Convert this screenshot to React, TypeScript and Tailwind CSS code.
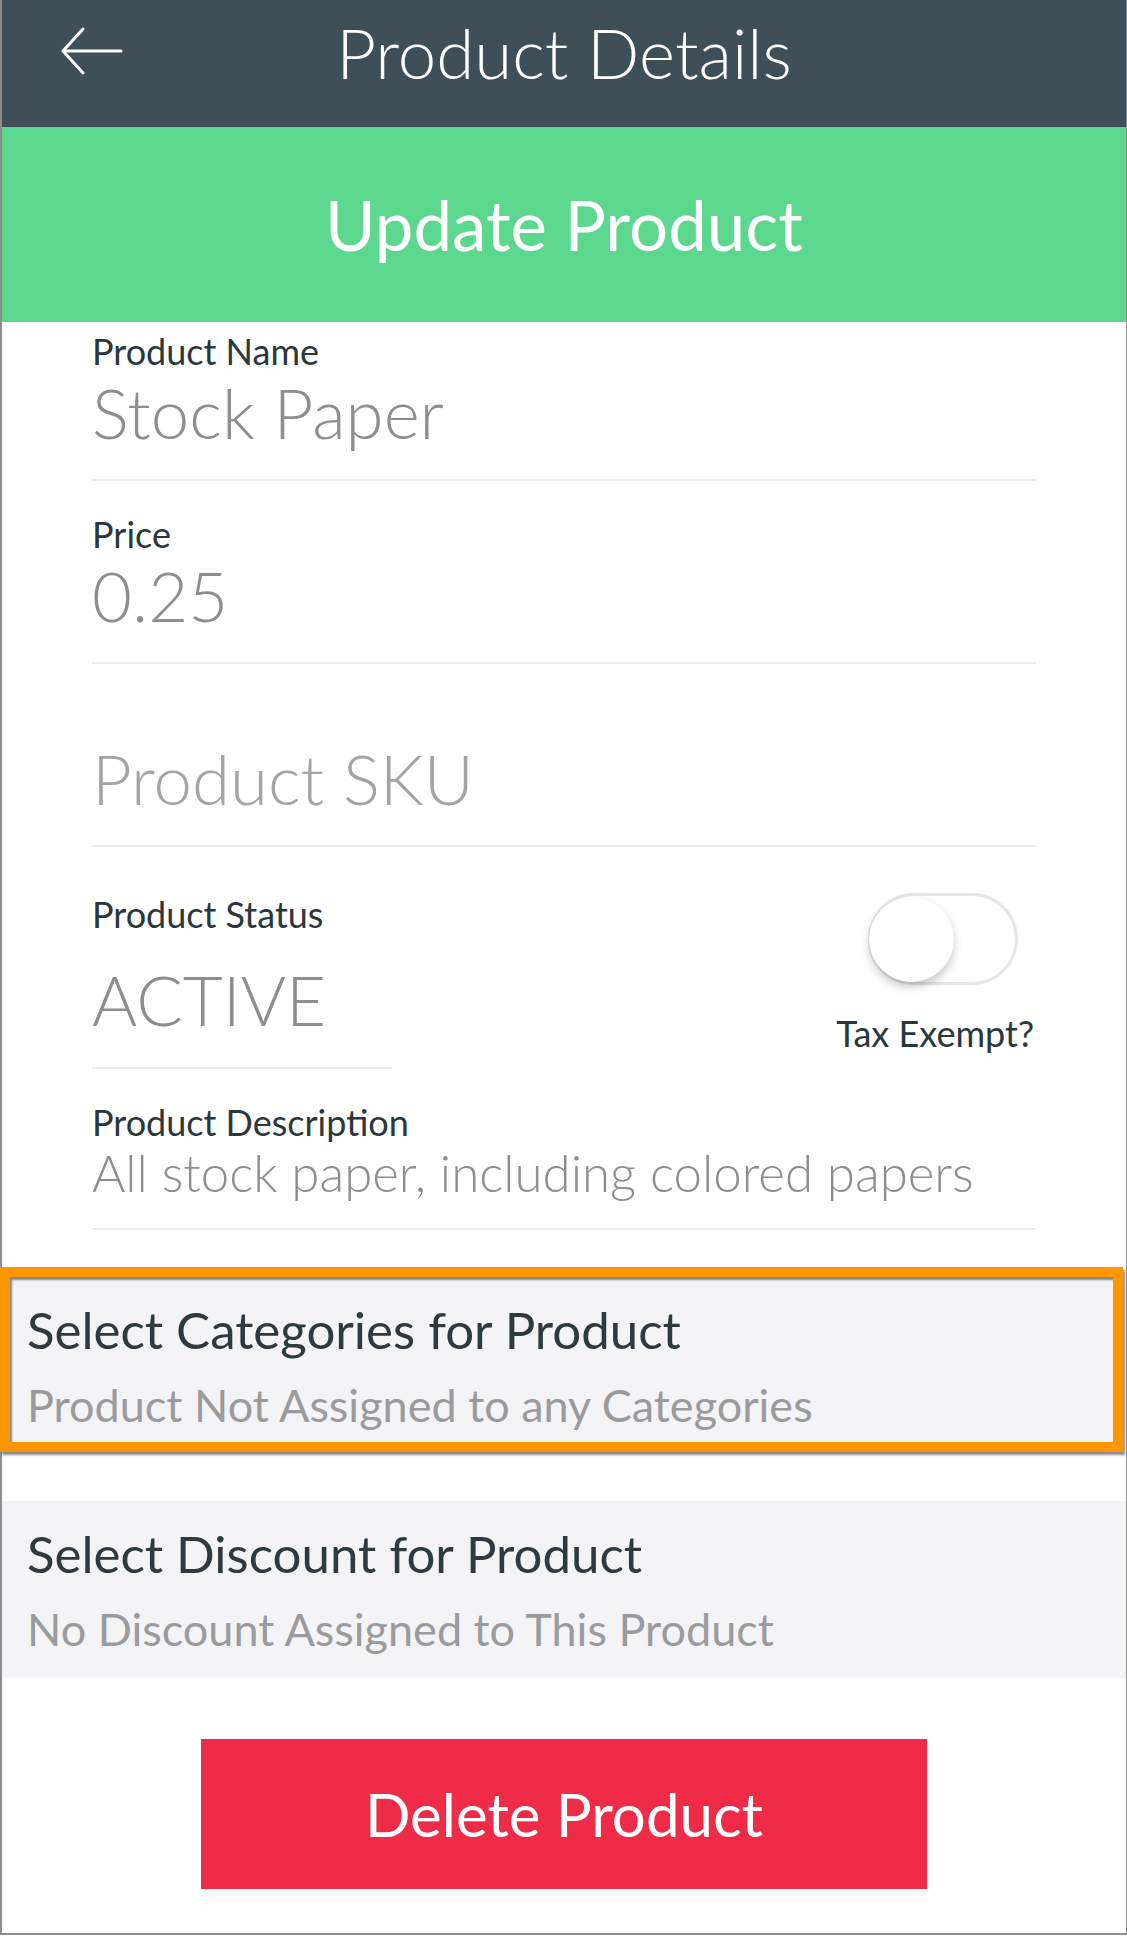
import React from "react";

const lato = { fontFamily: "Lato, 'Open Sans', sans-serif" };

function BackArrow() {
  return (
    <svg width="62" height="48" viewBox="0 0 62 48" fill="none">
      <path
        d="M22 2 L2 24 L22 46 M2 24 L60 24"
        stroke="white"
        strokeWidth="3"
        strokeLinecap="round"
        strokeLinejoin="round"
      />
    </svg>
  );
}

function Field({
  label,
  value,
  pt,
  placeholder,
}: {
  label: string;
  value: string;
  pt: string;
  placeholder?: boolean;
}) {
  return (
    <div className={`${pt} pb-[26px] border-b-2 border-[#ececee]`}>
      <div className="h-[41px] text-[36px] leading-[41px] text-[#2a373c]">
        {label}
      </div>
      <div
        className={`mt-[1px] text-[69px] leading-[80px] font-light ${
          placeholder ? "text-[#a4a4a6]" : "text-[#8e8e90]"
        }`}
      >
        {value}
      </div>
    </div>
  );
}

export default function App() {
  return (
    <div
      className="w-[1127px] bg-white border-l-2 border-r border-b-2 border-[#8d8d8d]"
      style={lato}
    >
      <div className="h-[127px] bg-[#3e4f58] grid grid-cols-[1fr_auto_1fr] items-start pt-[12px]">
        <div className="pl-[59px] pt-[15px]">
          <BackArrow />
        </div>
        <div className="text-white text-[69px] leading-[82px] font-light">
          Product Details
        </div>
        <div />
      </div>

      <div className="h-[195px] bg-[#5bd88e] flex items-center justify-center">
        <span className="text-white text-[69px] leading-[79px]">
          Update Product
        </span>
      </div>

      <div className="pl-[90px] pr-[90px]">
        <Field label="Product Name" value="Stock Paper" pt="pt-[9px]" />
        <Field label="Price" value="0.25" pt="pt-[33px]" />
        <Field label="" value="Product SKU" pt="pt-[33px]" placeholder />

        <div className="flex justify-between">
          <div className="w-[300px] pt-[47px] pb-[27px] border-b-2 border-[#ececee]">
            <div className="text-[36px] leading-[41px] text-[#2a373c]">
              Product Status
            </div>
            <div className="mt-[25px] text-[69px] leading-[80px] font-light text-[#8e8e90]">
              ACTIVE
            </div>
          </div>
          <div className="flex flex-col items-end pt-[46px] pr-[2px]">
            <div className="mr-[16px] w-[150px] h-[92px] rounded-full border-[3px] border-[#e6e6e8] bg-white flex items-center">
              <div className="-ml-[2px] w-[85px] h-[85px] rounded-full bg-white shadow-[0_5px_9px_rgba(0,0,0,0.22)]" />
            </div>
            <div className="mt-[28px] text-[36px] leading-[41px] text-[#2a373c]">
              Tax Exempt?
            </div>
          </div>
        </div>

        <div className="pt-[33px] pb-[28px] border-b-2 border-[#ececee]">
          <div className="text-[36px] leading-[41px] text-[#2a373c]">
            Product Description
          </div>
          <div className="mt-[2px] text-[51px] leading-[55px] font-light text-[#8e8e90]">
            All stock paper, including colored papers
          </div>
        </div>
      </div>

      <div className="mt-[37px] -ml-[2px] w-[1123px] border-[10px] border-[#ff9500] shadow-[2px_3px_2px_rgba(0,0,0,0.45),inset_2px_3px_2px_rgba(0,0,0,0.45)] bg-[#f4f4f6] pt-[25px] pb-[12px] pl-[17px]">
        <div className="text-[51px] leading-[56px] text-[#2e3a3f]">
          Select Categories for Product
        </div>
        <div className="mt-[22px] text-[45px] leading-[50px] text-[#9b9b9d]">
          Product Not Assigned to any Categories
        </div>
      </div>

      <div className="mt-[49px] bg-[#f4f4f6] pt-[25px] pb-[24px] pl-[25px]">
        <div className="text-[51px] leading-[56px] text-[#2e3a3f]">
          Select Discount for Product
        </div>
        <div className="mt-[22px] text-[45px] leading-[50px] text-[#9b9b9d]">
          No Discount Assigned to This Product
        </div>
      </div>

      <div className="pt-[61px] pb-[44px] flex justify-center">
        <button className="w-[726px] h-[150px] bg-[#ef2b47] text-white text-[60px] leading-[72px]">
          Delete Product
        </button>
      </div>
    </div>
  );
}
